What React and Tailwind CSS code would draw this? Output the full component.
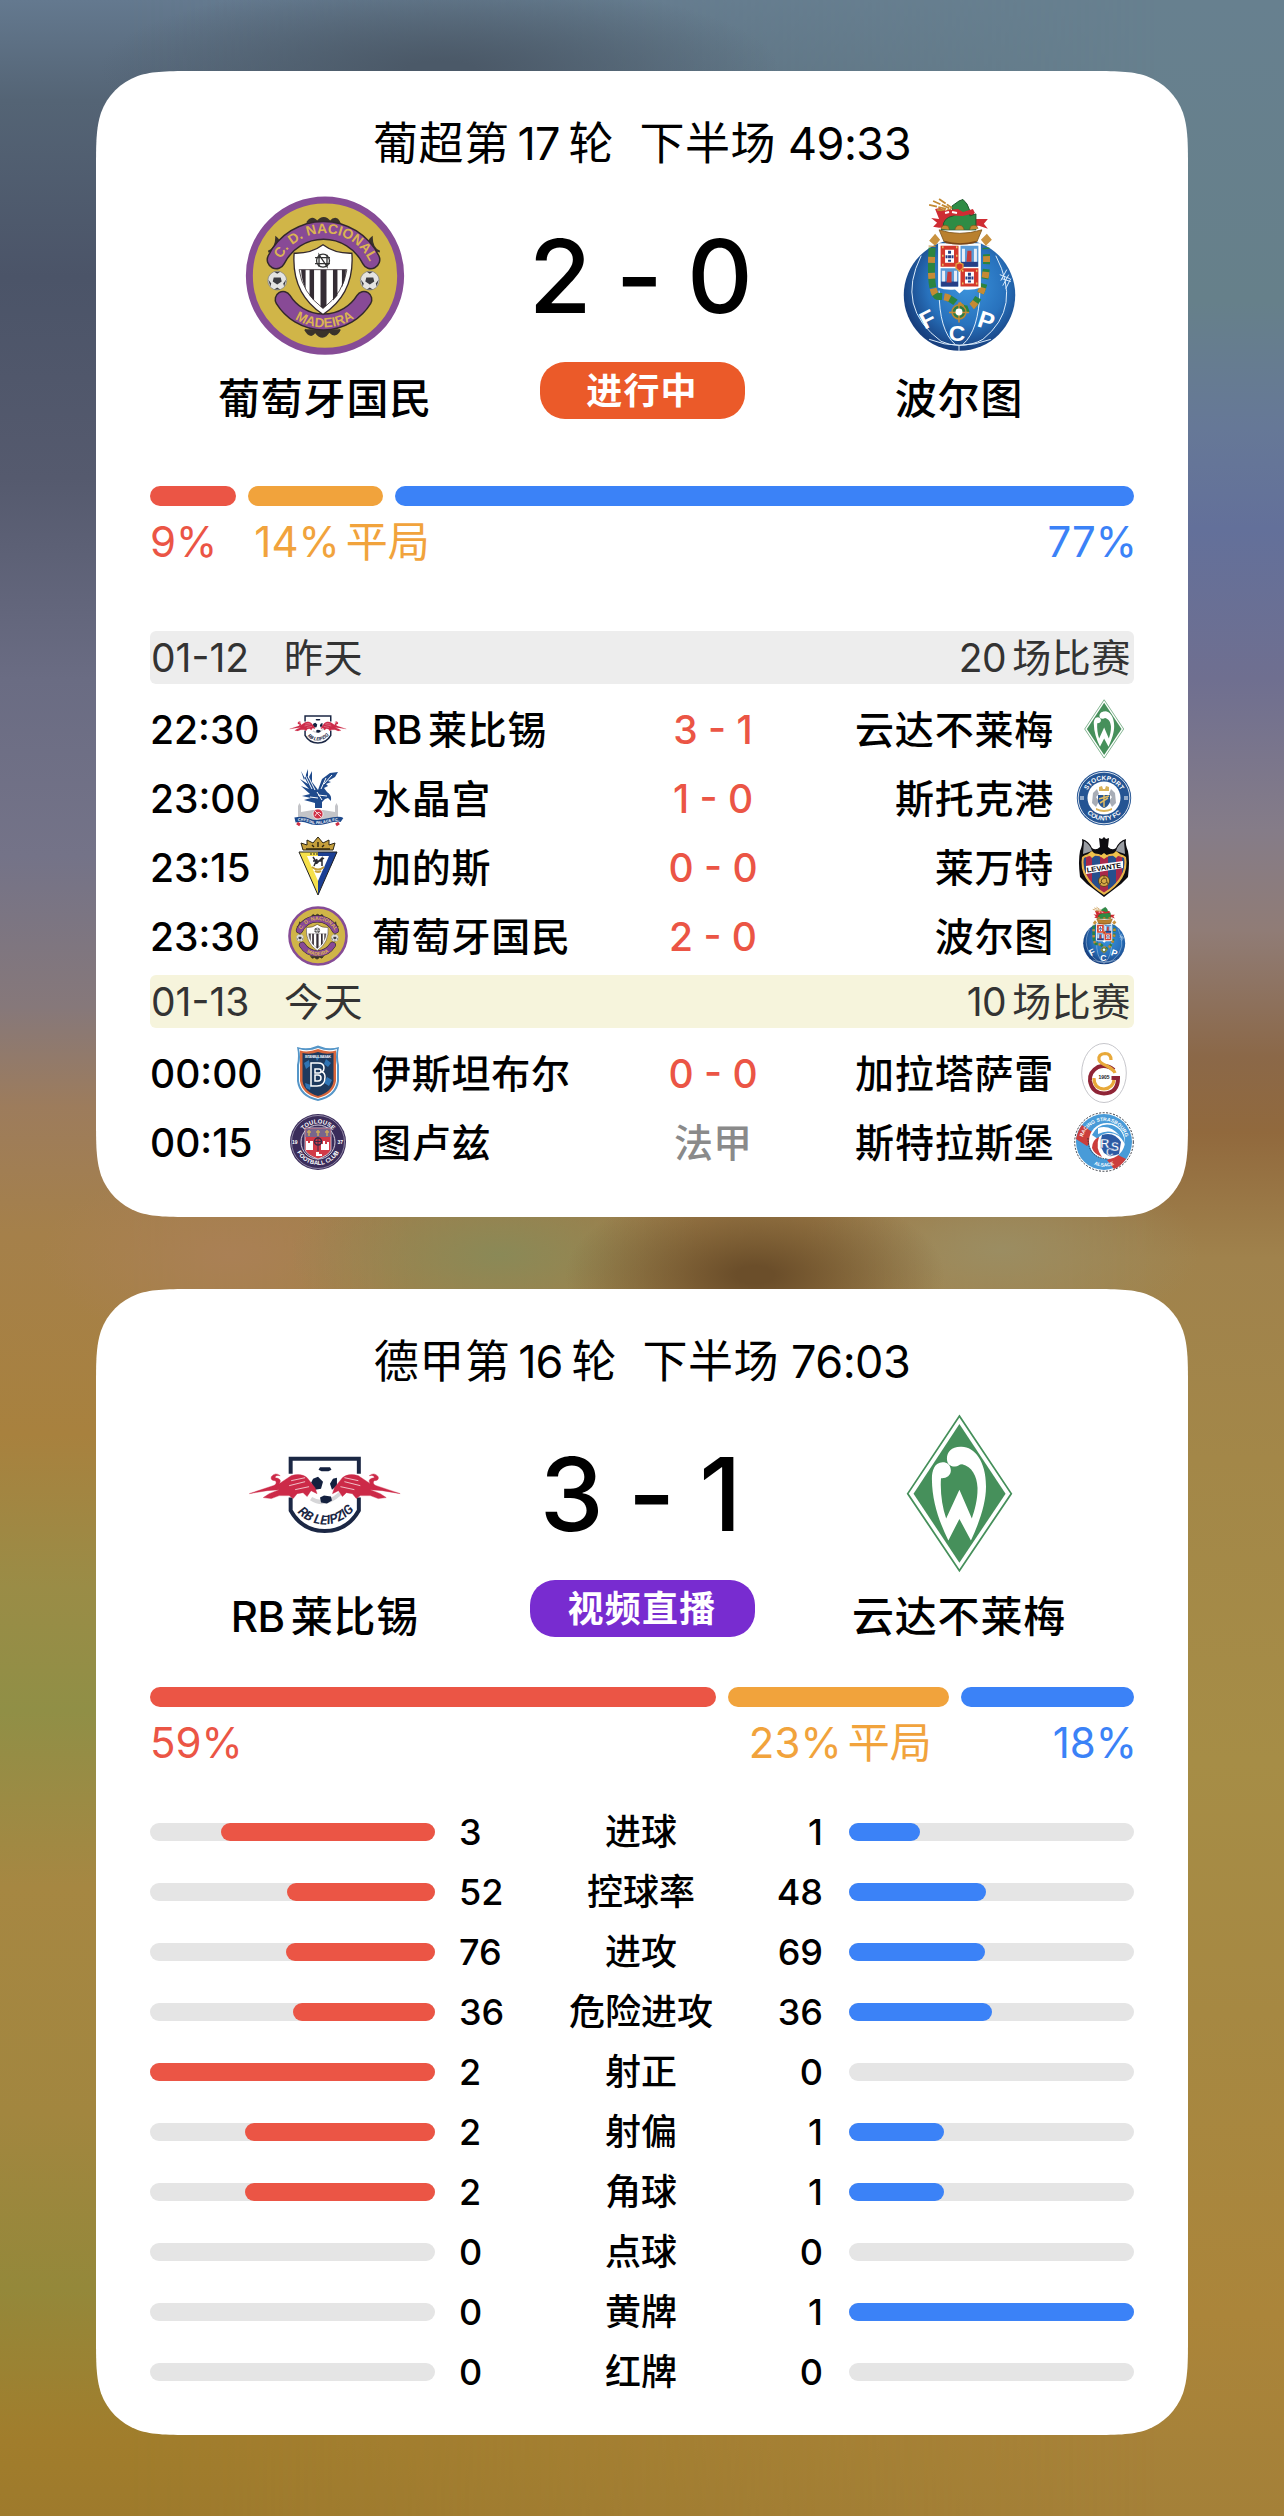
import { useId } from "react";

/* ---------- club crests ---------- */

function Nacional({ className }) {
  const id = useId();
  return (
    <svg viewBox="0 0 160 160" className={className}>
      <circle cx="80" cy="80" r="76" fill="#d0b548" stroke="#864c96" strokeWidth="7" />
      <path d="M62 27q5-8 10-1q7-8 13 0q7-7 10 2M23 56q8-3 8-14q5 4 2 14M135 56q-8-3-8-14q-5 4-2 14M60 134q6 10 10 2q8 11 14 0q7 7 11-2" fill="#3a332b" stroke="#3a332b" strokeWidth="2" />
      <path d="M31 64A53 53 0 0 1 126 64" fill="none" stroke="#33282c" strokeWidth="19.5" strokeLinecap="round" />
      <path d="M31 64A53 53 0 0 1 126 64" fill="none" stroke="#884a96" strokeWidth="16.5" strokeLinecap="round" />
      <path d="M38 104A47.6 47.6 0 0 0 119 104" fill="none" stroke="#33282c" strokeWidth="17.5" strokeLinecap="round" />
      <path d="M38 104A47.6 47.6 0 0 0 119 104" fill="none" stroke="#884a96" strokeWidth="14.5" strokeLinecap="round" />
      <path id={`${id}t`} d="M33 69A50 50 0 0 1 127 72" fill="none" />
      <path id={`${id}b`} d="M42 117A53 53 0 0 0 117 116" fill="none" />
      <g fill="#dbb452" fontFamily="Liberation Sans, sans-serif" fontWeight="700" textAnchor="middle">
        <text fontSize="14"><textPath href={`#${id}t`} startOffset="50%">C. D. NACIONAL</textPath></text>
        <text fontSize="13.500"><textPath href={`#${id}b`} startOffset="50%">MADEIRA</textPath></text>
      </g>
      <path d="M78 49Q90 58 107 57.500Q110 98 78 119Q46 98 49 57.500Q66 58 78 49Z" fill="#fff" stroke="#33282c" strokeWidth="1.300" />
      <path d="M54 74H102Q99 97 78 113Q57 97 54 74Z" fill="#fff" stroke="#33282c" strokeWidth=".8" />
      <path d="M56 74h4.500v19q-4-8-4.500-19ZM64.500 74h4.500v31l-4.500-5ZM75.500 74h6v36l-3.500 3-2.500-2ZM88 74h4.500v26l-4.500 5ZM97 74h4q0 8-4 18Z" fill="#342c34" />
      <g fill="none" stroke="#333" strokeWidth="1.300">
        <circle cx="78" cy="65" r="6.500" />
        <path d="M74 71V59L82 71V59M70 62h15M70 68h15" />
      </g>
      {[32, 125].map((x) => (
        <g key={x}>
          <circle cx={x} cy="85" r="9.500" fill="#e4e4e2" stroke="#8a8a86" strokeWidth=".8" />
          <path d={`M${x - 3.5} 82h7l1 4-4.500 3-4.500-3ZM${x - 9} 84l3 4-1 3ZM${x + 9} 84l-3 4 1 3ZM${x - 3} 76h6l-3 2ZM${x - 3} 94l3-2 3 2Z`} fill="#3c3c40" />
        </g>
      ))}
    </svg>
  );
}

function Porto({ className }) {
  const id = useId();
  return (
    <svg viewBox="0 0 160 160" className={className}>
      <defs>
        <radialGradient id={id} cx=".56" cy=".42" r=".58">
          <stop offset="0" stopColor="#3b93dc" />
          <stop offset=".6" stopColor="#2872bd" />
          <stop offset="1" stopColor="#173f7e" />
        </radialGradient>
      </defs>
      <circle cx="80.500" cy="99.500" r="56" fill={`url(#${id})`} />
      <g fill="none" stroke="#dcecfa" strokeWidth="1">
        <path d="M42 60Q16 112 62 146Q70 150 80 150Q94 150 104 144Q144 112 117 60M60 95Q60 135 76 149M101 95Q100 135 84 149M50 144Q80 156 112 144M80 150v6" />
        <path d="M122 85l6-11M124 90l6-11M127 93l5-10M121 79l10 4M123 83l9 3" />
      </g>
      <path d="M53 52Q50 102 60 101T80 110T100 101T107 52" fill="none" stroke="#2b8440" strokeWidth="7" strokeDasharray="10 5" />
      <path d="M53 50Q50 102 60 101T80 110T100 101T107 50" fill="none" stroke="#c68a35" strokeWidth="7" strokeDasharray="6 10" strokeDashoffset="-11" />
      <path d="M50 45l6-7 5 6-5 6ZM102 44l6-6 5 6-6 6Z" fill="#c9923f" />
      <circle cx="80" cy="116.500" r="7" fill="#2e7b45" stroke="#b98a34" strokeWidth="1.500" />
      <path d="M80 107v20M70 117h20" stroke="#c98a35" strokeWidth="1.500" />
      <circle cx="80" cy="116.500" r="3.500" fill="#fff" />
      <path d="M59 47.500H102V92Q94 95 85 94L80.500 98L76 94Q66 95 59 92Z" fill="#fff" />
      <path d="M61.500 50H79.500V71H61.500ZM81.500 72.500H99.500V91H81.500Z" fill="#d4382c" />
      <path d="M81.500 50H99.500V71H81.500ZM61.500 72.500H79.500V91H61.500Z" fill="#5a9bd8" />
      <path d="M66 54h9v13h-9ZM86 76h9v12h-9Z" fill="#fff" />
      <path d="M69 55h3v3h-3ZM69 59.500h3v3h-3ZM69 64h3v2h-3ZM66.500 59.500h2v3h-2ZM72.500 59.500h2v3h-2ZM89 77h3v3h-3ZM89 81h3v3h-3ZM89 85h3v2h-3ZM86.500 81h2v3h-2ZM92.500 81h2v3h-2ZM82 66h17v5h-17ZM62 86h17v5h-17Z" fill="#263f86" />
      <path d="M83 53h3v13h-3ZM95 53h3v13h-3ZM63 75h3v11h-3ZM75 75h3v11h-3Z" fill="#e8eef6" />
      <path d="M88.500 55h4v11h-5ZM68.500 76h4v11h-5Z" fill="#c43a3a" />
      <path d="M63 51.500h1.500M77 51.500h1.500M63 60h1.500M77 60h1.500M63 69h1.500M83 75h1.500M97 75h1.500M83 88h1.500M97 88h1.500" stroke="#e8c060" strokeWidth="2" />
      <path d="M77 68.500l3.500-1.500 3.500 1.500v4l-3.500 3-3.500-3Z" fill="#d4382c" stroke="#e2a33e" strokeWidth="1.300" />
      <path d="M56 13l5-1 7 4 26-2 3 9 12 0-4 5 4 5-9-3-40 2-6-1 4-4-6-5 8 1Z" fill="#cf2c33" />
      <path d="M64 31Q64 22 74 20L80 17Q72 16 73 10L80 5L84 3.500L88 8Q92 15 91 20L97 18V34H62Z" fill="#2e8c45" stroke="#1d5a2e" strokeWidth="1" />
      <path d="M50 9l22 5M54 5l18 8M60 3l13 9M58 14l14 1" stroke="#c48a34" strokeWidth="1.800" strokeDasharray="8 1.500" />
      <path d="M62 15l17-2 5 3 10-3 2 4-12 3-20-1Z" fill="#cf2c33" />
      <path d="M66 17l4-1M73 16l5 1" stroke="#fff" strokeWidth="2" />
      <path d="M60 34Q80 41 103 34L98 46Q81 51 65 46Z" fill="#b9802e" stroke="#7b521b" strokeWidth=".8" />
      <path d="M62 33a4 4 0 1 1 8 1M76 34a4 4 0 1 1 9 0M91 34a4 4 0 1 1 8-1" fill="#c38a34" stroke="#7b521b" strokeWidth=".7" />
      <path d="M65 45Q81 50 98 45L95 47.500Q81 50 67 47.500Z" fill="#79461a" />
      <g fill="#fff" fontFamily="Liberation Sans, sans-serif" fontWeight="700" textAnchor="middle">
        <text fontSize="24" transform="translate(52 131) rotate(-27)">F</text>
        <text fontSize="23" transform="translate(78 146)">C</text>
        <text fontSize="24" transform="translate(105 133) rotate(18)">P</text>
      </g>
    </svg>
  );
}

function Bull() {
  return (
    <g fill="#cc2a48" stroke="#cc2a48" strokeWidth=".4">
      <path d="M4 80L34 70L46 62Q56 59 62 64L70 74L72 80L66 77L62 83L58 79L52 80L48 85L44 82L34 82L26 85L18 84L24 80L34 76L22 77Z" />
      <path d="M27 74q6-5 3-7q-5 0-4-4q4-5 9-1q-5-1-5 2q6 1 5 4q-1 4-6 7Z" />
      <path d="M46 67l14-3M44 72l16-4M50 76l14-3" stroke="#fff" strokeWidth=".7" />
    </g>
  );
}

function Leipzig({ className }) {
  const id = useId();
  return (
    <svg viewBox="0 0 160 160" className={className}>
      <path d="M45.500 60V45H114V60M45.500 84V97Q57 117.500 79.700 117.500T114 97V84" fill="none" stroke="#1b2744" strokeWidth="4" />
      <path d="M63 67Q70 54 80 54Q90 54 97 67L93 82Q87 89 80 89Q70 89 66 82Z" fill="#fff" />
      <path d="M66 85Q80 94 95 80" fill="none" stroke="#d6d6d8" strokeWidth="4" />
      <path d="M75 53.500h10l1.500 2.500-3 1.500h-7l-3-1.500ZM68 65l5-2 5 5-2 7-6 1-4-7ZM92 64l-4 1-3 5 2 6 5-4ZM75 84l4-2 7 1 1 4-5 3-6-1Z" fill="#14213f" />
      <Bull />
      <g transform="matrix(-1 0 0 1 159.500 0)"><Bull /></g>
      <path id={id} d="M47 92Q58 110 80 111Q102 110 114 89" fill="none" />
      <text fill="#1b2744" fontFamily="Roboto, sans-serif" fontStyle="italic" fontWeight="700" fontSize="13" textAnchor="middle">
        <textPath href={`#${id}`} startOffset="50%">RB LEIPZIG</textPath>
      </text>
    </svg>
  );
}

function Werder({ className }) {
  return (
    <svg viewBox="0 0 160 160" className={className}>
      <path d="M80.400 2L132.500 80L80.400 157.500L28.500 80Z" fill="#fff" stroke="#46905b" strokeWidth="1.800" />
      <path d="M80.400 10L126.800 80L80.400 149.500L34.300 80Z" fill="#46905b" />
      <path d="M63.600 48.500C55 48.500 52.500 58 52.800 66C53 88 60 108 69.300 127L80.400 105.500L92 127C101 108 107.500 88 107.100 72C107 47 95 32 81.400 33C72 33 67.500 39 67.900 45.500C68 50 71 53 76 52.800C79 52.800 80 50.500 83.200 50.500C93 53 98 62 98.600 74C98.800 86 96 96 92.900 105L80.400 76L67.100 105C63 93 61 79 61.900 64.500C67 65 72 62 71.800 56.500C71.500 51 68 48.500 63.600 48.500Z" fill="#fff" />
    </svg>
  );
}

function Palace({ className }) {
  const id = useId();
  return (
    <svg viewBox="0 0 60 60" className={className}>
      <path d="M10 52V38l1.500-3 1.500 3v6l12-2h10l12 2v-6l1.500-3 1.500 3v14Z" fill="#c3c4c8" />
      <path d="M13 3L16 12L20 1L20 11L24 3L24 14L30 22L34 11L42 5L50 4L47 9L40 13L43 14L38 16L40 18L36 20L39 24Q44 27 43 33L40 30L37 31L34 34L34 40H27L27 35L16 32L23 30L14 28L22 26L13 18L21 21L12 11L20 16Z" fill="#1f4a8c" />
      <path d="M16 5l8 16M20 8l7 14M38 10l-5 11M44 7l-8 9M30 27l9 1M22 29l8 1M29 24l5 8" stroke="#fff" strokeWidth="1" />
      <circle cx="30" cy="46" r="5" fill="#cf3045" stroke="#fff" strokeWidth=".7" />
      <path d="M27 43l6 6M27 48q3-6 6-2" stroke="#fff" strokeWidth=".8" fill="none" />
      <path d="M9 55l3 2M51 55l-3 2" stroke="#cf3045" strokeWidth="3" />
      <path d="M7 52Q15 50 21 53T39 53T54 52" fill="none" stroke="#1f4a8c" strokeWidth="5" />
      <path id={id} d="M8 53.500Q15 51.500 21 54.500T39 54.500T53 53.500" fill="none" />
      <text fill="#fff" fontFamily="Liberation Sans, sans-serif" fontWeight="700" fontSize="3.800" textAnchor="middle"><textPath href={`#${id}`} startOffset="50%">CRYSTAL PALACE F.C.</textPath></text>
    </svg>
  );
}

function Cadiz({ className }) {
  return (
    <svg viewBox="0 0 60 60" className={className}>
      <path d="M15 13L13 6L19 8L19 3L25 6L30 0L35 6L41 3L41 8L47 6L45 13Z" fill="#c6a03c" stroke="#2b2412" strokeWidth="1" />
      <path d="M18 12h24M24 8l2 2M30 5v5M36 8l-2 2" stroke="#2b2412" strokeWidth="1.400" />
      <path d="M30 15H11L30 58Z" fill="#f6e04a" />
      <path d="M30 15H49L30 58Z" fill="#1b3f94" />
      <path d="M19 19H41L30 44Z" fill="#fff" />
      <path d="M30 15H49L43 29H41V19H30Z" fill="#1b3f94" />
      <path d="M11 15H49L30 58Z" fill="none" stroke="#222" strokeWidth="1" />
      <path d="M22 17h8" stroke="#222" strokeWidth="1.200" strokeDasharray="2 1" />
      <path d="M25 20l4 6 5-5v8M26 29l3-7M32 24l4-3M25 24h9" stroke="#2b2b33" strokeWidth="1.500" fill="none" />
      <path d="M24 30q6 5 12 0M27 34q3 2 6 0" stroke="#c6a03c" strokeWidth="2" fill="none" />
    </svg>
  );
}

function RingText({ id, top, bottom, size, r }) {
  const o = r + size * 0.72;
  return (
    <>
      <path id={`${id}t`} d={`M${30 - r} 31A${r} ${r} 0 0 1 ${30 + r} 31`} fill="none" />
      <path id={`${id}b`} d={`M${30 - o} 29A${o} ${o} 0 0 0 ${30 + o} 29`} fill="none" />
      <g fill="#fff" fontFamily="Liberation Sans, sans-serif" fontWeight="700" fontSize={size} textAnchor="middle">
        <text><textPath href={`#${id}t`} startOffset="50%">{top}</textPath></text>
        <text><textPath href={`#${id}b`} startOffset="50%">{bottom}</textPath></text>
      </g>
    </>
  );
}

function Stockport({ className }) {
  const id = useId();
  return (
    <svg viewBox="0 0 60 60" className={className}>
      <circle cx="30" cy="30" r="27.200" fill="#245493" />
      <circle cx="30" cy="30" r="25.800" fill="none" stroke="#fff" strokeWidth=".8" />
      <circle cx="30" cy="30" r="16.500" fill="#fff" />
      <RingText id={id} top="STOCKPORT" bottom="COUNTY FC" size={6.5} r={18.8} />
      <path d="M7 28v4M9 28v4M51 28v4M53 28v4" stroke="#fff" strokeWidth="1" />
      <path d="M19 25l4-4 2 5-3 3 3 4-3 6-4-4ZM41 25l-4-4-2 5 3 3-3 4 3 6 4-4Z" fill="#a8adb6" />
      <path d="M25 19l3-1 1 3h2l1-3 3 1v4H25ZM22 40q8 4 16 0v2q-8 4-16 0Z" fill="#d9b25a" />
      <path d="M24 27h12v7q-2 5-6 6q-4-1-6-6Z" fill="#2a5691" />
      <path d="M25 31l10-3M26 35l8-5M30 27v12" stroke="#e0bb63" strokeWidth="1.500" />
    </svg>
  );
}

function Levante({ className }) {
  const id = useId();
  return (
    <svg viewBox="0 0 60 60" className={className}>
      <path d="M8 2Q15 4 18 11Q22 14 26 10L25 1L28 2L30 0L32 2L35 1L34 10Q38 14 42 11Q45 4 52 2Q51 7 54 14Q56 24 54 40L47 47L30 60L13 47L6 40Q4 24 6 14Q9 7 8 2Z" fill="#0d0c10" />
      <path d="M10 4Q16 7 18 14L9 17ZM50 4Q44 7 42 14L51 17Z" fill="#9a9da3" />
      <path d="M8 20Q18 13 30 19Q42 13 52 20Q56 42 30 58Q4 42 8 20Z" fill="#e7b64a" />
      <clipPath id={id}><path d="M10 21Q19 16 30 21Q41 16 50 21Q53 41 30 55.500Q7 41 10 21Z" /></clipPath>
      <g clipPath={`url(#${id})`}>
        <path d="M5 15h50v45H5Z" fill="#a9284a" />
        <path d="M5 15h7v45H5ZM18 15h8v45h-8ZM34 15h8v45h-8ZM48 15h8v45h-8Z" fill="#264f8d" />
      </g>
      <path d="M14 17l4-3 4 4-4 3ZM46 17l-4-3-4 4 4 3ZM26 19l4-3 4 3-4 3Z" fill="#f0c34c" />
      <path d="M12 29L49 24V31L12 37Z" fill="#fff" />
      <text transform="translate(13 35.500) rotate(-8)" fontFamily="Liberation Sans, sans-serif" fontWeight="700" fontSize="7" textLength="35" lengthAdjust="spacingAndGlyphs" fill="#0d0c10">LEVANTE</text>
      <circle cx="30" cy="44" r="5.500" fill="#d8ab45" stroke="#4d3612" strokeWidth=".8" />
      <path d="M28 42l4-1 1 4-3 2-3-2ZM30 39v2M26 47l2-2M34 47l-1-2" stroke="#4d3612" strokeWidth=".8" fill="none" />
    </svg>
  );
}

function Basaksehir({ className }) {
  return (
    <svg viewBox="0 0 60 60" className={className}>
      <path d="M9 4Q20 7 30 2.500Q40 7 51 4Q49 13 51 22V38Q49 54 30 58Q11 54 9 38V22Q11 13 9 4Z" fill="#5596c8" />
      <path d="M11 6Q20 9 30 5Q40 9 49 6Q47 14 49 22V38Q47 52 30 56Q13 52 11 38V22Q13 14 11 6Z" fill="#fff" />
      <path d="M12 7.500Q20 10 30 6Q40 10 48 7.500V38Q46 51 30 55Q14 51 12 38Z" fill="#d7663c" />
      <path d="M14.500 10Q22 12 30 9Q38 12 45.500 10V38Q44 49 30 53Q16 49 14.500 38Z" fill="#1e3a5e" />
      <path d="M16 20l5-3 1 6-4 3ZM38 16l5 4-3 4-4-3ZM39 34l5 3-3 6-5-3ZM17 40l6 2-1 5-4-2ZM27 13l4 2-2 3Z" fill="#2f74b4" />
      <text x="30" y="14.500" textAnchor="middle" fontFamily="Liberation Sans, sans-serif" fontWeight="700" fontSize="3.600" fill="#e5edf5" textLength="26">ISTANBUL BASAK</text>
      <path d="M23 20h7q6 0 6 5q0 3-2 4q3 1 3 5q0 9-8 9h-6ZM27 26h4q2 0 2 2t-2 2h-4ZM27 32h3q3 0 3 3t-3 3h-3Z" fill="none" stroke="#fff" strokeWidth="1.500" />
    </svg>
  );
}

function Toulouse({ className }) {
  const id = useId();
  return (
    <svg viewBox="0 0 60 60" className={className}>
      <circle cx="30" cy="30" r="28" fill="#3a2c5a" />
      <circle cx="30" cy="30" r="26.500" fill="none" stroke="#b5aec4" strokeWidth=".7" />
      <circle cx="30" cy="30" r="17" fill="#3a2c5a" stroke="#d5d0de" strokeWidth="1" />
      <RingText id={id} top="TOULOUSE" bottom="FOOTBALL CLUB" size={6} r={19.5} />
      <text x="4" y="31.500" fill="#fff" fontFamily="Liberation Sans, sans-serif" fontWeight="700" fontSize="5">19</text>
      <text x="49.500" y="31.500" fill="#fff" fontFamily="Liberation Sans, sans-serif" fontWeight="700" fontSize="5">37</text>
      <path d="M17 16H43V38Q41 43 30 47Q19 43 17 38Z" fill="#d23a48" stroke="#e6e0ea" strokeWidth=".8" />
      <path d="M17.500 16.500H42.500V25H17.500Z" fill="#77668c" />
      <path d="M21 18v6M19 20h4M30 18v6M28 20h4M39 18v6M37 20h4" stroke="#cda95a" strokeWidth="1.500" />
      <path d="M18 38v-9h2v2h2v-2h3v9ZM33 38v-6h2v-3h2v3h2v-2h2v8ZM28 40h3v2h3v2h-6Z" fill="#fff" />
      <circle cx="30" cy="29.500" r="3.500" fill="none" stroke="#3c2a48" strokeWidth="1.500" />
      <path d="M30 25v14M26.500 29.500h7" stroke="#3c2a48" strokeWidth="1" />
    </svg>
  );
}

function Galatasaray({ className }) {
  return (
    <svg viewBox="0 0 60 60" className={className}>
      <ellipse cx="30" cy="30" rx="22.300" ry="29.500" fill="#fff" stroke="#b8b8be" strokeWidth=".8" />
      <path d="M40 27Q33 21 24 24Q15 29 16 38Q18 50 30 50.500Q44 50 44 35H37.500" fill="none" stroke="#8f2436" strokeWidth="4" />
      <path d="M37 17Q37 10.500 31 10.500Q24 11 25 17Q26 20 33 23Q40 27 41 30" fill="none" stroke="#e8a93a" strokeWidth="3.200" />
      <path d="M20 35Q20 45.500 30 46Q39 45 40 37" fill="none" stroke="#e8a93a" strokeWidth="3.200" />
      <text x="30" y="36.300" textAnchor="middle" fontFamily="Liberation Sans, sans-serif" fontWeight="700" fontSize="5" fill="#222">1905</text>
    </svg>
  );
}

function Strasbourg({ className }) {
  const id = useId();
  return (
    <svg viewBox="0 0 60 60" className={className}>
      <circle cx="30" cy="30" r="29.300" fill="#fff" stroke="#20252f" strokeWidth=".9" strokeDasharray="2 1.500" />
      <circle cx="30" cy="30" r="28" fill="#489bd8" />
      <path d="M8 13L24 24L13 34L2 27Q4 18 8 13ZM33 48L44 43L52 47Q46 55 40 57Z" fill="#cb3e3c" />
      <circle cx="33" cy="29" r="18" fill="#fff" />
      <path d="M18 23Q24 10 38 13Q50 17 51 32Q45 20 34 21Q26 22 24 27Z" fill="#489bd8" />
      <path d="M24 16Q36 12 46 24Q36 16 24 22Z" fill="#fff" />
      <path d="M25 25Q21 36 28 45Q20 42 18 36Q18 28 25 25Z" fill="#cb3e3c" />
      <path d="M14 26Q14 46 34 47" fill="none" stroke="#20252f" strokeWidth=".8" strokeDasharray="1.500 1" />
      <path d="M28 23Q40 19 47 30L45 42Q36 46 30 41Q25 33 28 23Z" fill="#2c5ba4" />
      <RingText id={id} top="RACING STRASBOURG" bottom="ALSACE" size={5} r={22} />
      <g fill="#fff" stroke="#2c5ba4" strokeWidth=".4" fontFamily="Liberation Sans, sans-serif" fontWeight="700">
        <text fontSize="13">
          <tspan x="26" y="36">R</tspan>
          <tspan x="32" y="44" fontSize="10">C</tspan>
          <tspan x="37" y="39" fontSize="12">S</tspan>
        </text>
      </g>
    </svg>
  );
}

/* ---------- shared pieces ---------- */

const CARD_SHAPE =
  "[clip-path:path('M100.900_0H991.100C1020.200_0_1034.700_0_1050.300_5C1067.400_11.200_1080.800_24.600_1087_41.700C1092_57.300_1092_71.800_1092_100.900V1045.100C1092_1074.200_1092_1088.700_1087_1104.300C1080.800_1121.400_1067.400_1134.800_1050.300_1141C1034.700_1146_1020.200_1146_991.100_1146H100.900C71.800_1146_57.300_1146_41.700_1141C24.600_1134.800_11.200_1121.400_5_1104.300C0_1088.700_0_1074.200_0_1045.100V100.900C0_71.800_0_57.300_5_41.700C11.200_24.600_24.600_11.200_41.700_5C57.300_0_71.800_0_100.900_0Z')]";

function Card({ children }) {
  return (
    <section className={`flex h-[1146px] w-[1092px] flex-col bg-white px-[54px] pt-[45px] ${CARD_SHAPE}`}>
      {children}
    </section>
  );
}

function Title({ league, round, clock }) {
  return (
    <h2 className="flex h-[54px] items-center justify-center text-[45px] leading-none">
      <span className="tracking-[0.500px]">{league}第</span>
      <span className="ml-2 tracking-[-1px]">{round}</span>
      <span className="ml-[9px]">轮</span>
      <span className="ml-[26px] tracking-[0.500px]">下半场</span>
      <span className="ml-3 tracking-[-0.500px]">{clock}</span>
    </h2>
  );
}

function TeamName({ prefix, name }) {
  return (
    <span className="flex items-center whitespace-nowrap">
      {prefix && <span className="mr-[6px] tracking-[-0.500px]">{prefix}</span>}
      <span className="tracking-[0.020em]">{name}</span>
    </span>
  );
}

function HeroTeam({ Crest, prefix, name }) {
  return (
    <div className="flex w-[350px] flex-col items-center">
      <Crest className="size-[160px]" />
      <div className="mt-[18px] flex h-[52px] items-center text-[42px] font-medium leading-none">
        <TeamName prefix={prefix} name={name} />
      </div>
    </div>
  );
}

function Hero({ home, away, score, badge, badgeClass }) {
  return (
    <div className="mt-[26px] flex h-[229px] justify-between">
      <HeroTeam {...home} />
      <div className="flex flex-col items-center whitespace-nowrap">
        <div className="flex h-[160px] items-center pr-[4px] text-[102px] font-medium leading-none tracking-[-1.500px]">{score}</div>
        <div className={`mt-[6px] flex h-[57px] items-center justify-center rounded-[25px] text-[36px] font-bold leading-none tracking-[1.200px] text-white ${badgeClass}`}>
          {badge}
        </div>
      </div>
      <HeroTeam {...away} />
    </div>
  );
}

function Odds({ home, draw, away, drawClass }) {
  return (
    <div>
      <div className="flex h-[19.500px] gap-3">
        <div className="rounded-full bg-[#eb5545]" style={{ flex: home }} />
        <div className="rounded-full bg-[#f1a33c]" style={{ flex: draw }} />
        <div className="rounded-full bg-[#3b82f7]" style={{ flex: away }} />
      </div>
      <div className="mt-[11px] flex h-[50px] items-center text-[42px] leading-none">
        <span className="text-[#eb5545]">{home}%</span>
        <span className={`flex text-[#f1a33c] ${drawClass}`}>
          <span>{draw}%</span>
          <span className="ml-[6px]">平局</span>
        </span>
        <span className="-mr-[3px] ml-auto text-[#3b82f7]">{away}%</span>
      </div>
    </div>
  );
}

function DayHeader({ date, day, count, className }) {
  return (
    <div className={`flex h-[53px] items-center rounded-md pl-[1px] pr-[3px] text-[39px] leading-none text-[#333] ${className}`}>
      <span className="w-[133px]">{date}</span>
      <span className="tracking-[0.600px]">{day}</span>
      <span className="ml-auto tracking-[-0.500px]">{count}</span>
      <span className="ml-[6px] tracking-[0.600px]">场比赛</span>
    </div>
  );
}

function Fixture({ time, Home, prefix, home, score, away, Away }) {
  return (
    <li className="flex h-[60px] items-center text-[39px] font-medium leading-none">
      <span className="w-[138px]">{time}</span>
      <Home className="size-[60px]" />
      <span className="ml-6 flex-1"><TeamName prefix={prefix} name={home} /></span>
      {score ? <span className="text-[#eb5545]">{score}</span> : <span className="text-[#8a8a8a]">法甲</span>}
      <span className="mr-5 flex flex-1 justify-end"><TeamName name={away} /></span>
      <Away className="size-[60px]" />
    </li>
  );
}

function Stat({ label, home, away }) {
  const total = home + away || 1;
  return (
    <li className="flex h-[60px] items-center text-[36px] font-medium leading-none">
      <div className="flex h-[18px] w-[285px] justify-end rounded-full bg-[#e5e5e5]">
        <div className="rounded-full bg-[#eb5545]" style={{ width: `${(home / total) * 100}%` }} />
      </div>
      <span className="ml-6 w-[60px]">{home}</span>
      <span className="flex-1 text-center">{label}</span>
      <span className="mr-[26px] w-[60px] text-right">{away}</span>
      <div className="flex h-[18px] w-[285px] rounded-full bg-[#e5e5e5]">
        <div className="rounded-full bg-[#3b82f7]" style={{ width: `${(away / total) * 100}%` }} />
      </div>
    </li>
  );
}

const yesterday = [
  { time: "22:30", Home: Leipzig, prefix: "RB", home: "莱比锡", score: "3 - 1", away: "云达不莱梅", Away: Werder },
  { time: "23:00", Home: Palace, home: "水晶宫", score: "1 - 0", away: "斯托克港", Away: Stockport },
  { time: "23:15", Home: Cadiz, home: "加的斯", score: "0 - 0", away: "莱万特", Away: Levante },
  { time: "23:30", Home: Nacional, home: "葡萄牙国民", score: "2 - 0", away: "波尔图", Away: Porto },
];

const today = [
  { time: "00:00", Home: Basaksehir, home: "伊斯坦布尔", score: "0 - 0", away: "加拉塔萨雷", Away: Galatasaray },
  { time: "00:15", Home: Toulouse, home: "图卢兹", away: "斯特拉斯堡", Away: Strasbourg },
];

const stats = [
  ["进球", 3, 1],
  ["控球率", 52, 48],
  ["进攻", 76, 69],
  ["危险进攻", 36, 36],
  ["射正", 2, 0],
  ["射偏", 2, 1],
  ["角球", 2, 1],
  ["点球", 0, 0],
  ["黄牌", 0, 1],
  ["红牌", 0, 0],
];

/* Blurred wallpaper: two vertical ramps cross-faded, with soft colour spots on top. */
function Wallpaper() {
  return (
    <div className="absolute inset-0 bg-[linear-gradient(to_bottom,#64798f_0%,#546475_4%,#4b5468_11%,#555a6e_19%,#6a6c83_27%,#747388_34%,#86787a_40%,#9d7c5c_44%,#a5804a_49%,#a8813e_57%,#9a8c46_63%,#908f46_68%,#a68742_75%,#a2863f_84%,#94883a_91%,#a17d2c_97%,#9e7a2c_100%)]">
      <div className="absolute inset-0 bg-[linear-gradient(to_bottom,#67808f_0%,#66808a_12%,#667897_17%,#63709a_21%,#6f6f90_27%,#857c88_33%,#907c76_37%,#8b6848_42%,#91693d_45%,#a0824c_50%,#a38748_58%,#a68d46_70%,#a68842_80%,#ab853a_92%,#a48038_100%)] [mask-image:linear-gradient(to_right,transparent_10%,black_90%)]" />
      <div className="absolute inset-0 bg-[radial-gradient(340px_90px_at_440px_70px,#4b5968_10%,transparent),radial-gradient(190px_90px_at_755px_1275px,#6b4e2a_10%,transparent),radial-gradient(210px_90px_at_500px_1255px,#8a8957_0%,transparent),radial-gradient(190px_90px_at_230px_1255px,#aa8055_0%,transparent),radial-gradient(200px_90px_at_1000px_1250px,#9b8d62_0%,transparent)]" />
    </div>
  );
}

export default function App() {
  return (
    <main className="relative h-[2516px] w-[1284px] overflow-hidden font-['Inter','Noto_Sans_CJK_SC',sans-serif] text-black">
      <Wallpaper />
      <div className="relative flex flex-col items-center gap-[72px] pt-[71px]">
        <Card>
          <Title league="葡超" round="17" clock="49:33" />
          <Hero
            home={{ Crest: Nacional, name: "葡萄牙国民" }}
            away={{ Crest: Porto, name: "波尔图" }}
            score="2 - 0"
            badge="进行中"
            badgeClass="w-[205px] bg-[#eb5a29]"
          />
          <div className="mt-[61px]">
            <Odds home={9} draw={14} away={77} drawClass="ml-[37px]" />
          </div>
          <DayHeader date="01-12" day="昨天" count="20" className="mt-[64.500px] bg-[#ededed]" />
          <ul className="mb-[9px] mt-[15px] flex flex-col gap-[9px]">
            {yesterday.map((m) => <Fixture key={m.time} {...m} />)}
          </ul>
          <DayHeader date="01-13" day="今天" count="10" className="bg-[#f6f4dc]" />
          <ul className="mt-[15px] flex flex-col gap-[9px]">
            {today.map((m) => <Fixture key={m.time} {...m} />)}
          </ul>
        </Card>
        <Card>
          <Title league="德甲" round="16" clock="76:03" />
          <Hero
            home={{ Crest: Leipzig, prefix: "RB", name: "莱比锡" }}
            away={{ Crest: Werder, name: "云达不莱梅" }}
            score="3 - 1"
            badge="视频直播"
            badgeClass="w-[225px] bg-[#782cd0]"
          />
          <div className="mt-[44px]">
            <Odds home={59} draw={23} away={18} drawClass="ml-[506px]" />
          </div>
          <ul className="mt-[34px] flex flex-col">
            {stats.map(([label, home, away]) => <Stat key={label} label={label} home={home} away={away} />)}
          </ul>
        </Card>
      </div>
    </main>
  );
}
